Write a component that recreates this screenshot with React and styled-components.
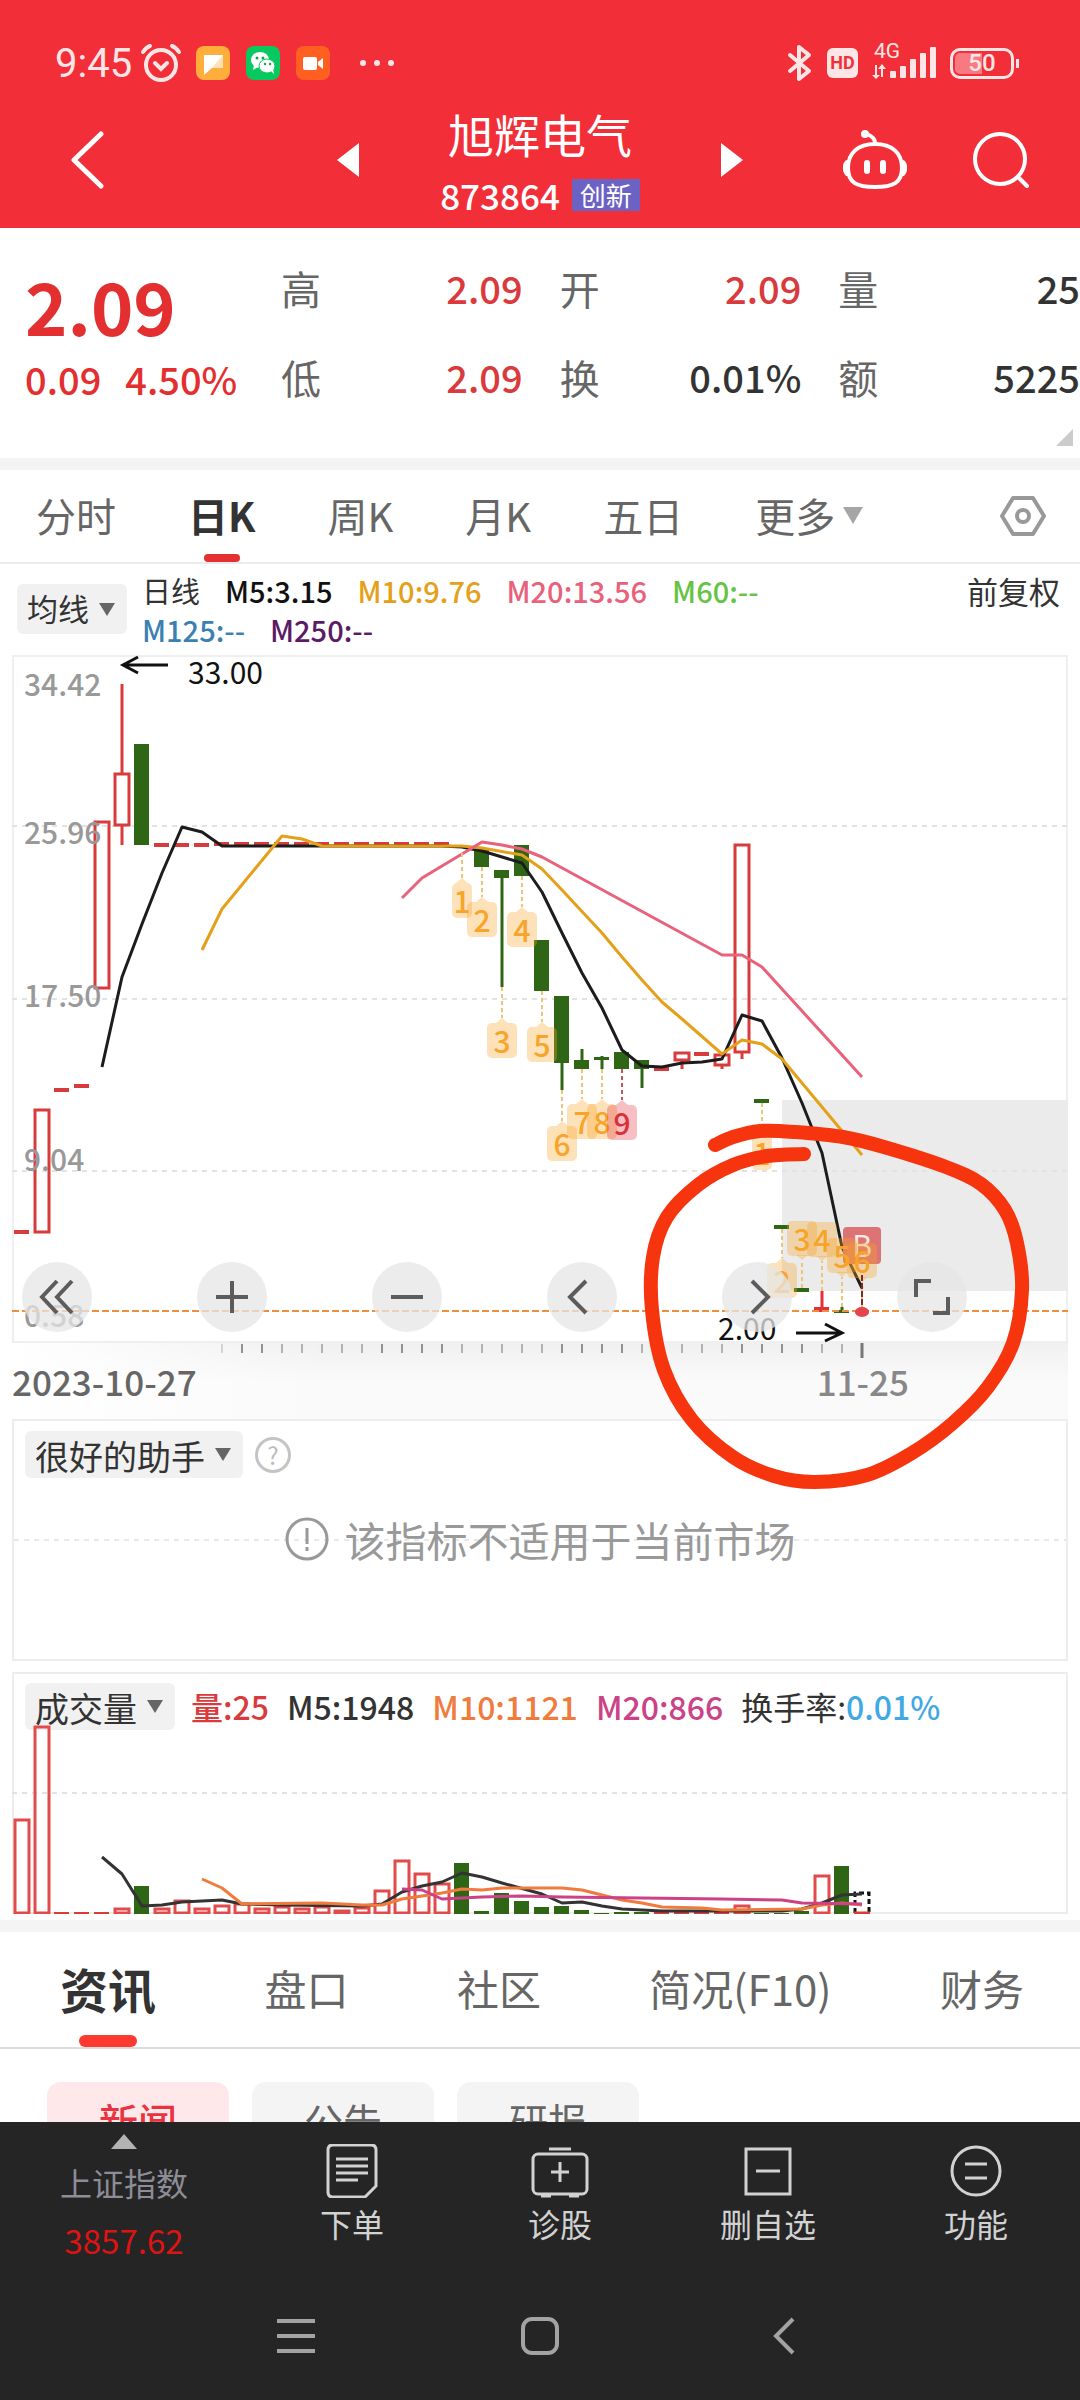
import React, { useState } from "react";
import styled, { createGlobalStyle } from "styled-components";

const RED = "#d93a3c";
const GREEN = "#2e6615";
const STEP = 20;

const xAt = (i) => 10 + i * STEP;

// [index, kind, top, bottom, high, low] in plot units
const candles = [
  [0, "flat", 575, 579],
  [1, "up", 454, 578],
  [2, "flat", 433, 437],
  [3, "flat", 429, 433],
  [4, "up", 166, 334],
  [5, "up", 118, 171, 29, 190],
  [6, "down", 89, 190],
  ...[7, 8, 9].map((i) => [i, "flat", 188, 192]),
  ...[10, 11, 12, 13, 14, 15, 16, 17, 18, 19, 20, 21].map((i) => [
    i,
    "flat",
    187,
    191,
  ]),
  [23, "down", 194, 212],
  [24, "down", 215, 223, 215, 332],
  [25, "down", 190, 221],
  [26, "down", 285, 336],
  [27, "down", 341, 408, 341, 435],
  [28, "down", 405, 414, 394, 414],
  [29, "down", 402, 405, 401, 414],
  [30, "down", 397, 414],
  [31, "down", 405, 414, 405, 433],
  [32, "flat", 412, 416],
  [33, "up", 397, 406, 397, 414],
  [34, "flat", 397, 401],
  [35, "up", 399, 411, 399, 414],
  [36, "up", 189, 398, 189, 404],
  [37, "down", 444, 448],
  [38, "down", 570, 574],
  [39, "down", 633, 637],
  [40, "solid", 652, 657, 636, 657],
  [41, "down", 655, 658, 652, 658],
];

const priceLines = [
  {
    color: "#e5a019",
    points: [
      [9, 295], [10, 254], [13, 181], [14, 184], [15, 191], [22, 191],
      [23, 193], [25, 200], [26, 214], [27, 235], [29, 278], [30, 302],
      [31, 325], [32, 347], [33, 364], [35, 399], [36, 385], [37, 389],
      [38, 404], [42, 500],
    ],
  },
  {
    color: "#e9617a",
    points: [
      [19, 243], [20, 223], [23, 187], [24, 190], [25, 194], [26, 202],
      [35, 300], [36, 300], [37, 312], [42, 422],
    ],
  },
];

const blackLine = [
  [4, 412], [5, 322], [6, 269], [7, 218], [8, 172], [9, 177], [10, 191],
  [21, 191], [22, 192], [23, 196], [25, 208], [26, 237], [27, 278],
  [28, 318], [29, 353], [30, 395], [31, 411], [32, 412], [33, 408],
  [34, 407], [35, 404], [36, 360], [37, 366], [38, 403], [39, 448],
  [40, 498], [41, 592], [42, 633],
];

// from = where the dashed stem leaves the candle, tip = where it meets the tag
const marks = [
  { i: 22, n: 1, from: 198, tip: 223, w: 20 },
  { i: 23, n: 2, from: 212, tip: 242 },
  { i: 24, n: 3, from: 332, tip: 363 },
  { i: 25, n: 4, from: 221, tip: 252 },
  { i: 26, n: 5, from: 336, tip: 367 },
  { i: 27, n: 6, from: 435, tip: 466 },
  { i: 28, n: 7, from: 414, tip: 444 },
  { i: 29, n: 8, from: 414, tip: 444 },
  { i: 30, n: 9, from: 414, tip: 445, hot: true },
  { i: 37, n: 1, from: 448, tip: 475, w: 20 },
  { i: 38, n: 2, from: 574, tip: 603 },
  { i: 39, n: 3, from: 633, tip: 605, up: true },
  { i: 40, n: 4, from: 636, tip: 606, up: true },
  { i: 41, n: 5, from: 652, tip: 622, up: true },
  { i: 42, n: 6, from: 652, tip: 627, up: true },
];

const axisLabels = [
  ["34.42", 41],
  ["25.96", 189],
  ["17.50", 352],
  ["9.04", 516],
  ["0.58", 672],
];

const volumes = [
  [0, 147], [1, 54], [2, 240], [3, 240], [4, 240], [5, 236], [6, 214, "g"],
  [7, 236], [8, 228], [9, 236], [10, 233], [11, 231], [12, 236], [13, 234],
  [14, 236], [15, 234], [16, 238], [17, 235], [18, 218], [19, 188],
  [20, 201], [21, 211], [22, 191, "g"], [23, 239, "g"], [24, 221, "g"],
  [25, 229, "g"], [26, 235, "g"], [27, 234, "g"], [28, 238, "g"],
  [29, 241, "g"], [30, 240, "g"], [31, 240, "g"], [32, 240], [33, 240],
  [34, 240], [35, 239], [36, 233], [37, 241, "g"], [38, 241, "g"],
  [39, 239, "g"], [40, 203], [41, 194, "g"],
];

const volumeLines = [
  {
    color: "#333",
    points: [
      [4, 185], [5, 202], [6, 234], [7, 233], [8, 230], [9, 229], [10, 228],
      [11, 232], [13, 233], [17, 234], [18, 232], [19, 220], [20, 214],
      [21, 210], [22, 201], [23, 205], [24, 211], [26, 222], [27, 231],
      [28, 230], [29, 234], [30, 237], [32, 239], [35, 239], [38, 239],
      [39, 237], [40, 231], [41, 223], [42, 222],
    ],
  },
  {
    color: "#ef7b3d",
    points: [
      [9, 207], [10, 216], [11, 232], [15, 231], [17, 233], [18, 233],
      [19, 227], [20, 224], [21, 221], [22, 217], [23, 218], [24, 216],
      [27, 216], [28, 218], [29, 223], [30, 228], [31, 231], [32, 235],
      [34, 236], [35, 238], [39, 237], [40, 233], [41, 231], [42, 233],
    ],
  },
  {
    color: "#cb4286",
    points: [
      [19, 217], [20, 218], [21, 227], [23, 225], [25, 224], [27, 225],
      [35, 227], [38, 228], [39, 231], [42, 232],
    ],
  },
];

const scribble = [
  [703, 490], [721, 482], [748, 476], [783, 477], [831, 482], [872, 492],
  [934, 512], [969, 529], [993, 555], [1005, 588], [1010, 635], [1001, 688],
  [976, 732], [941, 768], [900, 798], [855, 820], [803, 827], [762, 821],
  [721, 802], [680, 765], [652, 715], [640, 655], [641, 602], [655, 562],
  [686, 530], [721, 510], [755, 501], [792, 499],
];

const toPoints = (list) => list.map(([i, y]) => `${xAt(i)},${y}`).join(" ");

function smoothPath(pts) {
  let d = `M${pts[0][0]} ${pts[0][1]}`;
  for (let k = 0; k < pts.length - 1; k++) {
    const a = pts[k - 1] || pts[k];
    const b = pts[k];
    const c = pts[k + 1];
    const e = pts[k + 2] || c;
    d += ` C${b[0] + (c[0] - a[0]) / 6} ${b[1] + (c[1] - a[1]) / 6}`;
    d += ` ${c[0] - (e[0] - b[0]) / 6} ${c[1] - (e[1] - b[1]) / 6}`;
    d += ` ${c[0]} ${c[1]}`;
  }
  return d;
}

function Candle({ data }) {
  const [i, kind, top, bottom, high, low] = data;
  const x = xAt(i);
  const color = kind === "down" ? GREEN : kind === "solid" ? "#e5303a" : RED;
  const hollow = kind === "up";
  return (
    <g stroke={color} strokeWidth="3" fill={hollow ? "none" : color}>
      {high < top && <line x1={x} x2={x} y1={high} y2={top} />}
      {low > bottom && <line x1={x} x2={x} y1={bottom} y2={low} />}
      {hollow ? (
        <rect
          x={x - 7}
          y={top + 1}
          width="14"
          height={bottom - top - 2}
        />
      ) : (
        <rect
          x={x - 8}
          y={top}
          width="15"
          height={bottom - top}
          stroke="none"
        />
      )}
    </g>
  );
}

function Mark({ i, n, from, tip, w = 30, up, hot }) {
  const x = xAt(i);
  const boxTop = up ? tip - 39 : tip + 5;
  const arrow = up
    ? `M${x - 6} ${tip - 5} L${x} ${tip} L${x + 6} ${tip - 5}Z`
    : `M${x - 6} ${tip + 5} L${x} ${tip} L${x + 6} ${tip + 5}Z`;
  const fill = hot ? "rgba(225,50,60,0.31)" : "rgba(250,165,40,0.33)";
  return (
    <g>
      <line
        x1={x}
        x2={x}
        y1={from}
        y2={tip}
        stroke={hot ? "#c9525c" : "#ecc579"}
        strokeWidth="2"
        strokeDasharray="4 3"
      />
      <path d={arrow} fill={fill} />
      <rect
        x={x - w / 2}
        y={boxTop}
        width={w}
        height="35"
        rx="5"
        fill={fill}
      />
      <TagText x={x} y={boxTop + 30} fill={hot ? "#d9303a" : "#f7a428"}>
        {n}
      </TagText>
    </g>
  );
}

function PriceChart() {
  return (
    <ChartSvg viewBox="0 0 1056 688" role="img" aria-label="日K">
      <rect x="770" y="445" width="286" height="191" fill="#ebebeb" />
      {[171, 344, 516].map((y) => (
        <GridLine key={y} x1="0" x2="1056" y1={y} y2={y} />
      ))}
      {candles.map((c) => (
        <Candle key={c[0]} data={c} />
      ))}
      <PlotLine points={toPoints(blackLine)} stroke="#1c1c1c" />
      {priceLines.map((l) => (
        <PlotLine key={l.color} points={toPoints(l.points)} stroke={l.color} />
      ))}
      {axisLabels.map(([t, y]) => (
        <AxisText key={t} x="12" y={y}>
          {t}
        </AxisText>
      ))}
      <line
        x1="0"
        x2="1056"
        y1="656"
        y2="656"
        stroke="#ef8f3c"
        strokeWidth="2"
        strokeDasharray="7 3"
      />
      <rect x="831" y="572" width="38" height="37" rx="4" fill="#dc7375" />
      <BadgeText x="850" y="602">
        B
      </BadgeText>
      {marks.map((m) => (
        <Mark key={`${m.i}`} {...m} />
      ))}
      <line
        x1="850"
        x2="850"
        y1="620"
        y2="654"
        stroke="#7d2b2f"
        strokeWidth="2"
        strokeDasharray="6 2"
      />
      <ellipse cx="850" cy="657" rx="7" ry="5" fill="#e5444c" />
      <Pointer d="M156 10 H112 M126 2 L111 10 L126 18" />
      <PriceText x="176" y="29">
        33.00
      </PriceText>
      <PriceText x="706" y="685">
        2.00
      </PriceText>
      <Pointer d="M784 678 H829 M813 669 L830 678 L813 686" />
    </ChartSvg>
  );
}

function VolumeChart() {
  return (
    <VolumeSvg viewBox="0 0 1056 242" role="img" aria-label="成交量">
      <GridLine x1="0" x2="1056" y1="121" y2="121" />
      {volumes.map(([i, top, g]) =>
        g || top > 238 ? (
          <rect
            key={i}
            x={xAt(i) - 8}
            y={top}
            width="15"
            height={243 - top}
            fill={g ? GREEN : RED}
          />
        ) : (
          <rect
            key={i}
            x={xAt(i) - 7}
            y={top + 1}
            width="14"
            height={240 - top}
            fill="none"
            stroke="#e14b4b"
            strokeWidth="3"
          />
        )
      )}
      <path
        d="M843 241 V221 H857 V241"
        fill="none"
        stroke="#111"
        strokeWidth="3"
        strokeDasharray="5 3"
      />
      <line x1="842" x2="858" y1="241" y2="241" stroke="#d93a3c" strokeWidth="3" />
      {volumeLines.map((l) => (
        <PlotLine key={l.color} points={toPoints(l.points)} stroke={l.color} />
      ))}
    </VolumeSvg>
  );
}

function Picker({ label, size, id }) {
  return (
    <PickerBox $size={size}>
      <select id={id} aria-label={label} defaultValue={label}>
        <option>{label}</option>
      </select>
      <svg width="16" height="13" viewBox="0 0 16 13" aria-hidden="true">
        <path d="M0 0H16L8 13Z" fill="#666" />
      </svg>
    </PickerBox>
  );
}

function StatusBar() {
  return (
    <Status>
      <StatusGroup>
        <Clock>9:45</Clock>
        <svg width="42" height="40" viewBox="0 0 42 40" fill="none" stroke="#ffe6e6" strokeWidth="4" strokeLinecap="round">
          <circle cx="21" cy="22" r="15" />
          <path d="M15 20l6 6 6-6M3 9c2-3 4-5 7-6M39 9c-2-3-4-5-7-6" />
        </svg>
        <AppIcons>
          <svg width="34" height="34" viewBox="0 0 34 34">
            <rect width="34" height="34" rx="8" fill="#ffad3b" />
            <path d="M8 9h19v13H16l-8 7z" fill="#fff" />
            <path d="M27 9v13H16z" fill="#ffe1b5" />
          </svg>
          <svg width="34" height="34" viewBox="0 0 34 34">
            <rect width="34" height="34" rx="8" fill="#07c95f" />
            <ellipse cx="14" cy="14" rx="9" ry="8" fill="#fff" />
            <path d="M8 19l-1 5 5-3z" fill="#fff" />
            <ellipse cx="21" cy="20" rx="8" ry="7" fill="#fff" stroke="#07c95f" />
            <path d="M25 25l3 3-1-5z" fill="#fff" />
            <g fill="#07a84f">
              <circle cx="11" cy="12" r="1.5" />
              <circle cx="17" cy="12" r="1.5" />
              <circle cx="19" cy="18" r="1.2" />
              <circle cx="24" cy="18" r="1.2" />
            </g>
          </svg>
          <svg width="34" height="34" viewBox="0 0 34 34">
            <rect width="34" height="34" rx="8" fill="#ff6022" />
            <rect x="7" y="11" width="14" height="13" rx="2" fill="#fff" />
            <path d="M22 16l5-4v11l-5-4z" fill="#fff" />
          </svg>
        </AppIcons>
        <svg width="34" height="8" viewBox="0 0 34 8" fill="#ffe6e6">
          <circle cx="3" cy="4" r="3" />
          <circle cx="17" cy="4" r="3" />
          <circle cx="31" cy="4" r="3" />
        </svg>
      </StatusGroup>
      <StatusGroup>
        <svg width="26" height="38" viewBox="0 0 26 38" fill="none" stroke="#ffe6e6" strokeWidth="4" strokeLinejoin="round" strokeLinecap="round">
          <path d="M3 11l19 16-10 8V3l10 8L3 27" />
        </svg>
        <HdTag>HD</HdTag>
        <Signal>
          <span>4G</span>
          <svg width="64" height="32" viewBox="0 0 64 32" fill="#ffe6e6">
            <path d="M3 18h2v10h3l-4 4-4-4h3zM9 30V22H6l4-5 4 5h-3v8z" />
            <rect x="18" y="24" width="6" height="7" rx="1" />
            <rect x="28" y="19" width="6" height="12" rx="1" />
            <rect x="38" y="12" width="6" height="19" rx="1" />
            <rect x="48" y="6" width="6" height="25" rx="1" />
            <rect x="58" y="0" width="6" height="31" rx="1" />
          </svg>
        </Signal>
        <Battery>50</Battery>
      </StatusGroup>
    </Status>
  );
}

const periods = ["分时", "日K", "周K", "月K", "五日"];
const sections = ["资讯", "盘口", "社区", "简况(F10)", "财务"];

const quoteCells = [
  ["高", "2.09", true],
  ["开", "2.09", true],
  ["量", "25", false],
  ["低", "2.09", true],
  ["换", "0.01%", false],
  ["额", "5225", false],
];

function App() {
  const [period, setPeriod] = useState("日K");
  const [section, setSection] = useState("资讯");
  const [feed, setFeed] = useState("新闻");

  return (
    <Screen>
      <GlobalStyle />
      <Header>
        <StatusBar />
        <TitleRow>
          <BackSide>
            <IconButton aria-label="返回">
              <svg width="34" height="58" viewBox="0 0 34 58" fill="none" stroke="#fff" strokeWidth="5" strokeLinecap="round" strokeLinejoin="round">
                <path d="M31 3L4 29l27 26" />
              </svg>
            </IconButton>
          </BackSide>
          <StockSwitch>
            <IconButton aria-label="上一只">
              <svg width="22" height="34" viewBox="0 0 22 34" fill="#fff">
                <path d="M22 0v34L0 17z" />
              </svg>
            </IconButton>
            <StockTitle>
              <h1>旭辉电气</h1>
              <StockCode>
                873864 <span>创新</span>
              </StockCode>
            </StockTitle>
            <IconButton aria-label="下一只">
              <svg width="22" height="34" viewBox="0 0 22 34" fill="#fff">
                <path d="M0 0v34l22-17z" />
              </svg>
            </IconButton>
          </StockSwitch>
          <ActionSide>
            <IconButton aria-label="助手">
              <svg width="64" height="60" viewBox="0 0 64 60" fill="none" stroke="#fff" strokeWidth="4" strokeLinecap="round">
                <path d="M32 14c17 0 27 9 27 24S50 57 32 57 5 53 5 38s10-24 27-24z" />
                <path d="M32 13c0-5-3-7-8-9" />
                <circle cx="22" cy="4" r="2" />
                <path d="M4 32c-3 3-3 9 0 12M60 32c3 3 3 9 0 12" />
                <path d="M24 33v8M40 33v8" strokeWidth="6" />
              </svg>
            </IconButton>
            <IconButton aria-label="搜索">
              <svg width="56" height="56" viewBox="0 0 56 56" fill="none" stroke="#fff" strokeWidth="4" strokeLinecap="round">
                <circle cx="27" cy="27" r="25" />
                <path d="M45 45l9 9" />
              </svg>
            </IconButton>
          </ActionSide>
        </TitleRow>
      </Header>

      <Quote>
        <PriceBlock>
          <strong>2.09</strong>
          <PriceChange>
            <span>0.09</span>
            <span>4.50%</span>
          </PriceChange>
        </PriceBlock>
        <QuoteGrid>
          {quoteCells.map(([label, value, up]) => (
            <QuoteCell key={label} $up={up}>
              <dt>{label}</dt>
              <dd>{value}</dd>
            </QuoteCell>
          ))}
        </QuoteGrid>
        <Corner width="17" height="17" viewBox="0 0 17 17">
          <path d="M17 0v17H0z" fill="#ccc" />
        </Corner>
      </Quote>
      <Divider />

      <PeriodTabs>
        {periods.map((p) => (
          <PeriodTab key={p} $active={p === period} onClick={() => setPeriod(p)}>
            {p}
          </PeriodTab>
        ))}
        <PeriodTab>
          更多
          <svg width="20" height="17" viewBox="0 0 20 17" fill="#a6a6a6">
            <path d="M0 0h20L10 17z" />
          </svg>
        </PeriodTab>
        <SettingsButton aria-label="设置">
          <svg width="46" height="42" viewBox="0 0 46 42" fill="none" stroke="#999" strokeWidth="4" strokeLinejoin="round">
            <path d="M13 3h20l11 18-11 18H13L2 21z" />
            <circle cx="23" cy="21" r="6" />
          </svg>
        </SettingsButton>
      </PeriodTabs>

      <AverageRow>
        <Picker id="line-type" label="均线" size={31} />
        <AverageList>
          <AverageLine>
            <Value $color="#333" $plain>
              日线
            </Value>
            <Value $color="#111">M5:3.15</Value>
            <Value $color="#e5a019">M10:9.76</Value>
            <Value $color="#e9617a">M20:13.56</Value>
            <Value $color="#66c344">M60:--</Value>
          </AverageLine>
          <AverageLine>
            <Value $color="#3a80b3">M125:--</Value>
            <Value $color="#5a1a66">M250:--</Value>
          </AverageLine>
        </AverageList>
        <AdjustButton>前复权</AdjustButton>
      </AverageRow>

      <ChartArea>
        <Plot>
          <PriceChart />
          <ChartControls>
            <RoundButton aria-label="最左">
              <Glyph viewBox="0 0 36 36">
                <path d="M18 2L3 18l15 16M33 2L18 18l15 16" />
              </Glyph>
            </RoundButton>
            <RoundButton aria-label="放大">
              <Glyph viewBox="0 0 36 36">
                <path d="M2 18h32M18 2v32" />
              </Glyph>
            </RoundButton>
            <RoundButton aria-label="缩小">
              <Glyph viewBox="0 0 36 36">
                <path d="M2 18h32" />
              </Glyph>
            </RoundButton>
            <RoundButton aria-label="向左">
              <Glyph viewBox="0 0 36 36">
                <path d="M22 2L6 18l16 16" />
              </Glyph>
            </RoundButton>
            <RoundButton aria-label="向右">
              <Glyph viewBox="0 0 36 36">
                <path d="M13 2l16 16-16 16" />
              </Glyph>
            </RoundButton>
            <RoundButton aria-label="全屏">
              <Glyph viewBox="0 0 36 36">
                <path d="M2 18V2h15M34 18v16H19" />
              </Glyph>
            </RoundButton>
          </ChartControls>
        </Plot>
        <DateAxis>
          <Ticks viewBox="0 0 1056 76" aria-hidden="true">
            {Array.from({ length: 32 }, (_, k) => k + 10).map((i) => (
              <line
                key={i}
                x1={xAt(i)}
                x2={xAt(i)}
                y1="1"
                y2="10"
                stroke="#888"
                strokeWidth="2"
                opacity={i === 10 ? 0.3 : i % 9 < 4 ? 0.9 : 0.6}
              />
            ))}
            <line x1="850" x2="850" y1="0" y2="15" stroke="#777" strokeWidth="3" />
          </Ticks>
          <time dateTime="2023-10-27">2023-10-27</time>
          <time>11-25</time>
        </DateAxis>
        <Scribble viewBox="0 0 1056 764" aria-hidden="true">
          <path d={smoothPath(scribble)} />
        </Scribble>
      </ChartArea>

      <IndicatorPanel>
        <PanelHead>
          <Picker id="indicator" label="很好的助手" size={34} />
          <HelpButton aria-label="说明">?</HelpButton>
        </PanelHead>
        <Notice>
          <svg width="44" height="44" viewBox="0 0 44 44" fill="none" stroke="#999" strokeWidth="3">
            <circle cx="22" cy="22" r="20" />
            <path d="M22 11v16M22 30v4" />
          </svg>
          该指标不适用于当前市场
        </Notice>
      </IndicatorPanel>

      <VolumePanel>
        <PanelHead>
          <Picker id="volume" label="成交量" size={34} />
          <VolumeValues>
            <Value $color={RED}>量:25</Value>
            <Value $color="#333">M5:1948</Value>
            <Value $color="#ef7b3d">M10:1121</Value>
            <Value $color="#cb4286">M20:866</Value>
            <Value $color="#333" $plain>
              换手率:<em>0.01%</em>
            </Value>
          </VolumeValues>
        </PanelHead>
        <VolumeChart />
      </VolumePanel>
      <Divider />

      <SectionTabs>
        {sections.map((s) => (
          <SectionTab key={s} $active={s === section} onClick={() => setSection(s)}>
            {s}
          </SectionTab>
        ))}
      </SectionTabs>

      <FeedArea>
        {["新闻", "公告", "研报"].map((f) => (
          <FeedButton key={f} $active={f === feed} onClick={() => setFeed(f)}>
            {f}
          </FeedButton>
        ))}
      </FeedArea>

      <Footer>
        <Toolbar>
          <IndexCell>
            <svg width="26" height="15" viewBox="0 0 26 15" fill="#b3b3b3">
              <path d="M13 0l13 15H0z" />
            </svg>
            <span>上证指数</span>
            <b>3857.62</b>
          </IndexCell>
          <ToolButton>
            <svg width="58" height="54" viewBox="0 0 58 54">
              <path d="M10 1h38q5 0 5 5v36L42 53H10q-5 0-5-5V6q0-5 5-5z" />
              <path d="M13 15h32M13 22h32M13 29h32M13 36h22" />
            </svg>
            下单
          </ToolButton>
          <ToolButton>
            <svg width="58" height="54" viewBox="0 0 58 54">
              <rect x="2" y="10" width="54" height="40" rx="5" />
              <path d="M18 5h22M20 28h18M29 18v20M10 52h10M38 52h10" />
            </svg>
            诊股
          </ToolButton>
          <ToolButton>
            <svg width="58" height="54" viewBox="0 0 58 54">
              <rect x="7" y="5" width="44" height="45" />
              <path d="M17 27h24" />
            </svg>
            删自选
          </ToolButton>
          <ToolButton>
            <svg width="58" height="54" viewBox="0 0 58 54">
              <circle cx="29" cy="27" r="24" />
              <path d="M18 20h22M18 34h22" />
            </svg>
            功能
          </ToolButton>
        </Toolbar>
        <SystemNav>
          <IconButton aria-label="最近任务">
            <svg width="38" height="38" viewBox="0 0 38 38" stroke="#a3a3a3" strokeWidth="4">
              <path d="M0 4h38M0 19h38M0 34h38" />
            </svg>
          </IconButton>
          <IconButton aria-label="主屏幕">
            <svg width="38" height="38" viewBox="0 0 38 38" fill="none" stroke="#a3a3a3" strokeWidth="4">
              <rect x="2" y="2" width="34" height="34" rx="9" />
            </svg>
          </IconButton>
          <IconButton aria-label="返回上级">
            <svg width="38" height="38" viewBox="0 0 38 38" fill="none" stroke="#a3a3a3" strokeWidth="4">
              <path d="M28 2L11 19l17 17" />
            </svg>
          </IconButton>
        </SystemNav>
      </Footer>
    </Screen>
  );
}

export default App;

const GlobalStyle = createGlobalStyle`
  * {
    box-sizing: border-box;
  }
  body {
    margin: 0;
    background: #fff;
    font-family: "Noto Sans CJK SC", "Roboto", sans-serif;
    color: #333;
  }
  button, select {
    margin: 0;
    padding: 0;
    border: none;
    background: none;
    font: inherit;
    color: inherit;
    white-space: nowrap;
  }
  h1, dl, dd {
    margin: 0;
  }
  svg {
    flex-shrink: 0;
  }
`;

const Screen = styled.div`
  display: flex;
  flex-direction: column;
  width: 100%;
  height: 100vh;
  overflow: hidden;
`;

const Header = styled.header`
  flex-shrink: 0;
  background: #f22f38;
  color: #fff;
`;

const Status = styled.div`
  display: flex;
  justify-content: space-between;
  height: 100px;
  padding: 26px 66px 0 55px;
  color: #ffe6e6;
`;

const StatusGroup = styled.div`
  display: flex;
  align-items: center;
  gap: 14px;
  height: 74px;
`;

const Clock = styled.span`
  margin-right: -6px;
  font-family: "Roboto", sans-serif;
  font-size: 40px;
`;

const AppIcons = styled.div`
  display: flex;
  gap: 16px;
  margin-right: 16px;
`;

const HdTag = styled.span`
  width: 31px;
  border-radius: 6px;
  background: #ffe6e6;
  color: #f22f38;
  font: 700 18px/30px "Roboto", sans-serif;
  text-align: center;
`;

const Signal = styled.div`
  position: relative;
  height: 32px;

  span {
    position: absolute;
    top: -8px;
    left: 2px;
    font: 21px/24px "Roboto", sans-serif;
  }
`;

const Battery = styled.span`
  position: relative;
  width: 64px;
  border: 3px solid #ffe6e6;
  border-radius: 10px;
  background: linear-gradient(90deg, #f87a80 50%, transparent 50%) content-box;
  padding: 2px;
  font: 500 24px/21px "Roboto", sans-serif;
  text-align: center;

  &::after {
    content: "";
    position: absolute;
    top: 8px;
    right: -8px;
    width: 3px;
    height: 9px;
    background: #ffe6e6;
  }
`;

const TitleRow = styled.div`
  display: grid;
  grid-template-columns: 1fr auto 1fr;
  align-items: center;
  height: 128px;
  padding-bottom: 8px;
`;

const IconButton = styled.button`
  display: flex;
  align-items: center;
  justify-content: center;
`;

const BackSide = styled.div`
  display: flex;
  padding-left: 70px;
`;

const ActionSide = styled.div`
  display: flex;
  align-items: center;
  justify-content: flex-end;
  gap: 66px;
  padding-right: 51px;
`;

const StockSwitch = styled.div`
  display: flex;
  align-items: center;
  justify-content: space-between;
  width: 406px;
`;

const StockTitle = styled.div`
  display: flex;
  flex-direction: column;
  align-items: center;
  gap: 20px;

  h1 {
    font-size: 46px;
    font-weight: 400;
    line-height: 50px;
  }
`;

const StockCode = styled.div`
  display: flex;
  align-items: center;
  gap: 12px;
  font-size: 35px;
  font-weight: 500;
  line-height: 34px;

  span {
    padding: 0 8px;
    background: #6c62c4;
    font-size: 26px;
    font-weight: 400;
    line-height: 32px;
  }
`;

const Quote = styled.section`
  position: relative;
  display: flex;
  flex-shrink: 0;
  height: 230px;
  padding: 32px 0 0 25px;
`;

const PriceBlock = styled.div`
  width: 256px;
  color: #e32f30;

  strong {
    display: block;
    font-size: 72px;
    font-weight: 700;
    line-height: 90px;
  }
`;

const PriceChange = styled.div`
  display: flex;
  gap: 24px;
  font-size: 38px;
  font-weight: 500;
  line-height: 58px;
`;

const QuoteGrid = styled.dl`
  display: grid;
  flex: 1;
  grid-template-columns: repeat(3, 1fr);
  grid-template-rows: 56px 56px;
  column-gap: 37px;
  row-gap: 33px;
`;

const QuoteCell = styled.div`
  display: flex;
  justify-content: space-between;
  font-size: 40px;
  line-height: 56px;
  color: #666;

  dd {
    font-size: 38px;
    font-weight: 500;
    color: ${({ $up }) => ($up ? "#d93a3c" : "#333")};
  }
`;

const Corner = styled.svg`
  position: absolute;
  right: 7px;
  bottom: 12px;
`;

const Divider = styled.div`
  flex-shrink: 0;
  height: 12px;
  background: #f4f4f4;
`;

const PeriodTabs = styled.nav`
  display: flex;
  flex-shrink: 0;
  gap: 72px;
  height: 94px;
  padding: 0 34px 0 36px;
  border-bottom: 2px solid #ececec;
`;

const PeriodTab = styled.button`
  position: relative;
  display: flex;
  align-items: center;
  gap: 8px;
  padding-bottom: 2px;
  font-size: 40px;
  font-weight: ${({ $active }) => ($active ? 700 : 400)};
  color: ${({ $active }) => ($active ? "#333" : "#666")};

  &::after {
    content: "";
    display: ${({ $active }) => ($active ? "block" : "none")};
    position: absolute;
    bottom: 0;
    left: calc(50% - 18px);
    width: 36px;
    height: 8px;
    border-radius: 4px;
    background: #e43032;
  }
`;

const SettingsButton = styled(IconButton)`
  margin-left: auto;
`;

const AverageRow = styled.section`
  display: flex;
  flex-shrink: 0;
  gap: 15px;
  height: 91px;
  padding: 7px 20px 0 17px;
  font-size: 31px;
`;

const PickerBox = styled.label`
  display: flex;
  align-items: center;
  gap: 10px;
  height: ${({ $size }) => ($size > 32 ? 47 : 50)}px;
  margin-top: ${({ $size }) => ($size > 32 ? 0 : 13)}px;
  padding: 0 12px 0 10px;
  border-radius: 6px;
  background: #f1f1f1;
  font-size: ${({ $size }) => $size}px;
  color: #333;

  select {
    height: 100%;
    padding-bottom: 4px;
    appearance: none;
  }

  svg {
    pointer-events: none;
  }
`;

const AverageList = styled.div`
  flex: 1;
  font-size: 29px;
`;

const AverageLine = styled.div`
  display: flex;
  gap: 25px;
  height: 39px;
  line-height: 39px;
`;

const Value = styled.span`
  color: ${({ $color }) => $color};
  font-weight: ${({ $plain }) => ($plain ? 400 : 500)};
  white-space: nowrap;

  em {
    font-style: normal;
    font-weight: 500;
    color: #3fa9e6;
  }
`;

const AdjustButton = styled.button`
  height: 39px;
  line-height: 39px;
`;

const ChartArea = styled.section`
  position: relative;
  z-index: 1;
  flex-shrink: 0;
  margin: 0 12px;
`;

const Plot = styled.div`
  position: relative;
  box-shadow: inset 0 0 0 2px #efefef;
`;

const ChartSvg = styled.svg`
  display: block;
  width: 100%;
`;

const GridLine = styled.line`
  stroke: #e2e2e2;
  stroke-width: 2px;
  stroke-dasharray: 5 5;
`;

const PlotLine = styled.polyline`
  fill: none;
  stroke-width: 3px;
  stroke-linejoin: round;
`;

const AxisText = styled.text`
  font-size: 30px;
  font-weight: 500;
  fill: #999;
`;

const TagText = styled.text`
  font-size: 30px;
  font-weight: 500;
  text-anchor: middle;
`;

const BadgeText = styled.text`
  font-size: 30px;
  text-anchor: middle;
  fill: #ffe9e0;
`;

const PriceText = styled.text`
  font-size: 30px;
  fill: #111;
`;

const Pointer = styled.path`
  fill: none;
  stroke: #111;
  stroke-width: 3px;
`;

const ChartControls = styled.div`
  position: absolute;
  right: 101px;
  bottom: 11px;
  left: 10px;
  display: flex;
  justify-content: space-between;
`;

const RoundButton = styled(IconButton)`
  width: 70px;
  height: 70px;
  border-radius: 50%;
  background: rgba(230, 230, 230, 0.75);
`;

const Glyph = styled.svg`
  width: 36px;
  height: 36px;
  fill: none;
  stroke: #5c5c5c;
  stroke-width: 4px;
`;

const DateAxis = styled.div`
  position: relative;
  display: flex;
  justify-content: space-between;
  height: 76px;
  padding: 0 159px 0 0;
  background: linear-gradient(90deg, #fff, transparent 30%),
    linear-gradient(#f0f0f0, #fafafa 50%);
  font-size: 35px;
  font-weight: 500;
  line-height: 76px;
  color: #666;

  time:last-of-type {
    color: #888;
  }
`;

const Ticks = styled.svg`
  position: absolute;
  inset: 0;
  width: 100%;
`;

const Scribble = styled.svg`
  position: absolute;
  top: 0;
  left: 0;
  width: 100%;
  overflow: visible;
  pointer-events: none;
  fill: none;
  stroke: #f6350f;
  stroke-width: 14px;
  stroke-linecap: round;
`;

const Panel = styled.section`
  position: relative;
  flex-shrink: 0;
  height: 242px;
  margin: 0 12px;
  border: 2px solid #ededed;
`;

const IndicatorPanel = styled(Panel)`
  padding: 10px 11px;
  margin-bottom: 11px;
  background: repeating-linear-gradient(90deg, #e8e8e8 0 5px, #fff 5px 10px)
    center / 100% 2px no-repeat;
`;

const VolumePanel = styled(Panel)`
  padding: 9px 11px;
  margin-bottom: 6px;
`;

const PanelHead = styled.div`
  display: flex;
  align-items: center;
  gap: 12px;
`;

const HelpButton = styled.button`
  width: 36px;
  height: 36px;
  border: 3px solid #c4c4c4;
  border-radius: 50%;
  font-size: 24px;
  line-height: 30px;
  color: #bbb;
`;

const Notice = styled.div`
  display: flex;
  align-items: center;
  justify-content: center;
  gap: 16px;
  margin-top: 32px;
  font-size: 41px;
  line-height: 58px;
  color: #999;
`;

const VolumeValues = styled.div`
  display: flex;
  gap: 18px;
  padding-left: 4px;
  font-size: 32px;
  line-height: 45px;
`;

const VolumeSvg = styled.svg`
  position: absolute;
  top: -2px;
  left: -2px;
  width: calc(100% + 4px);
  pointer-events: none;
`;

const SectionTabs = styled.nav`
  display: flex;
  flex-shrink: 0;
  justify-content: space-between;
  height: 117px;
  padding: 0 56px 0 60px;
  border-bottom: 2px solid #dcdcdc;
`;

const SectionTab = styled.button`
  position: relative;
  padding-bottom: 4px;
  font-size: ${({ $active }) => ($active ? 48 : 42)}px;
  font-weight: ${({ $active }) => ($active ? 700 : 400)};
  color: ${({ $active }) => ($active ? "#333" : "#666")};

  &::after {
    content: "";
    display: ${({ $active }) => ($active ? "block" : "none")};
    position: absolute;
    bottom: 0;
    left: calc(50% - 29px);
    width: 58px;
    height: 12px;
    border-radius: 6px;
    background: #fd3a30;
  }
`;

const FeedArea = styled.section`
  display: flex;
  flex: 1;
  gap: 23px;
  min-height: 0;
  padding: 33px 47px 0;
  overflow: hidden;
`;

const FeedButton = styled.button`
  width: 182px;
  height: 76px;
  border-radius: 14px;
  background: ${({ $active }) => ($active ? "#ffe8ea" : "#f4f4f4")};
  font-size: 39px;
  font-weight: ${({ $active }) => ($active ? 500 : 400)};
  color: ${({ $active }) => ($active ? "#ea3340" : "#666")};
`;

const Footer = styled.footer`
  flex-shrink: 0;
  background: #252525;
`;

const Toolbar = styled.div`
  display: grid;
  grid-template-columns: 248fr repeat(4, 208fr);
  height: 150px;
`;

const IndexCell = styled.div`
  display: flex;
  flex-direction: column;
  align-items: center;
  padding-top: 12px;
  font-size: 32px;
  line-height: 58px;
  color: #8d8d97;

  span {
    margin-top: 4px;
  }

  b {
    font-size: 33px;
    font-weight: 400;
    color: #dc1414;
  }
`;

const ToolButton = styled.button`
  display: flex;
  flex-direction: column;
  align-items: center;
  gap: 4px;
  padding-top: 22px;
  font-size: 32px;
  line-height: 42px;
  color: #d2d2d2;

  svg {
    fill: none;
    stroke: #d2d2d2;
    stroke-width: 3px;
  }
`;

const SystemNav = styled.nav`
  display: flex;
  align-items: center;
  justify-content: center;
  gap: 206px;
  height: 128px;
`;
